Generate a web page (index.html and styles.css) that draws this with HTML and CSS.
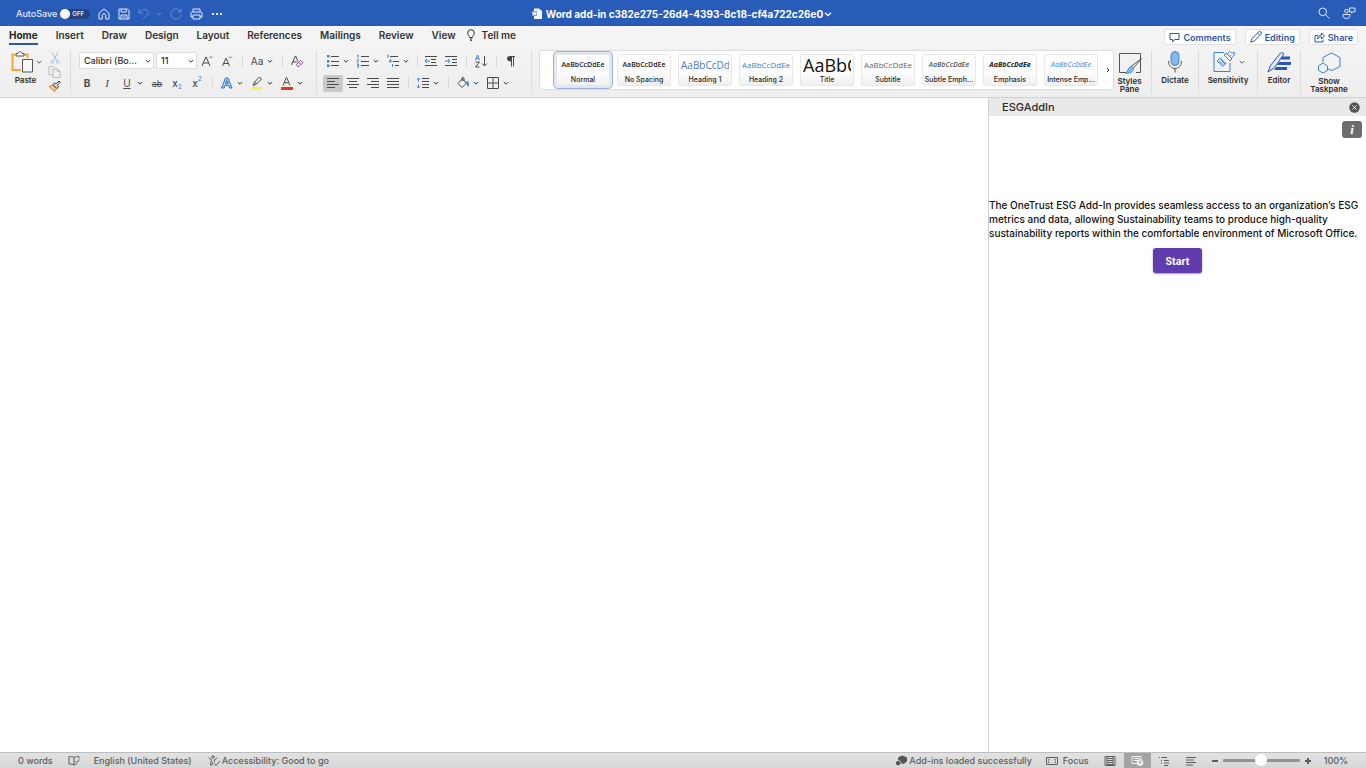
FILE: index.html
```html
<!DOCTYPE html>
<html lang="en">
<head>
<meta charset="utf-8">
<title>Word add-in</title>
<link rel="stylesheet" href="styles.css">
</head>
<body>
<svg class="defs" aria-hidden="true">
  <symbol id="chev" viewBox="0 0 6 6"><path d="M.8 2L3 4.200 5.200 2"/></symbol>
</svg>
<header class="titlebar">
  <div class="quick">
    <label class="autosave">AutoSave
      <span class="toggle"><input type="checkbox" role="switch"><span class="toggle-text">OFF</span></span>
    </label>
    <button aria-label="Home"><svg width="12" height="12" viewBox="0 0 12 12"><path d="M1 5.200L6 1l5 4.200V11H7.700V7.500a1.700 1.700 0 0 0-3.400 0V11H1z"/></svg></button>
    <button aria-label="Save"><svg width="12" height="12" viewBox="0 0 12 12"><path d="M1 1h8.500L11 2.500V11H1zM3.200 1v3h5V1M3 11V7h6v4M4.500 9h3"/></svg></button>
    <button class="dim undo" aria-label="Undo"><svg width="12" height="12" viewBox="0 0 12 12"><path d="M1 1v4h4M1.200 4.800C4 1 8 .8 9.700 3.200c1.500 2.400-.5 4.200-4.700 7.800"/></svg><svg class="chev" width="6" height="6"><use href="#chev"/></svg></button>
    <button class="dim" aria-label="Redo"><svg width="12" height="12" viewBox="0 0 12 12"><path d="M11 .8V4H7.800M10.800 4A5.200 5.200 0 1 0 11.200 6.500"/></svg></button>
    <button aria-label="Print"><svg width="13" height="12" viewBox="0 0 13 12"><path d="M3 4V1h7v3M3 9H1V5.200Q1 4 2.200 4h8.600Q12 4 12 5.200V9h-2M3 7h7v4H3z"/></svg></button>
    <button aria-label="More"><svg width="12" height="12" viewBox="0 0 12 12"><path class="dot" d="M1 5h2v2H1zM5 5h2v2H5zM9 5h2v2H9z"/></svg></button>
  </div>
  <button class="doc-title">
    <svg width="10" height="11" viewBox="0 0 10 11"><path class="page" d="M2 .5h5L10 3v8H2z"/><path class="badge" d="M0 3h5v5H0z"/><path class="badge-mark" d="M1 4.200l.8 2.500.7-2 .8 2L4 4.200"/></svg>
    <span>Word add-in c382e275-26d4-4393-8c18-cf4a722c26e0</span>
    <svg class="chev" width="8" height="8"><use href="#chev"/></svg>
  </button>
  <div class="title-actions">
    <button aria-label="Search"><svg width="12" height="12" viewBox="0 0 12 12"><circle cx="4.800" cy="4.800" r="3.800"/><path d="M7.600 7.600L11.500 11.500"/></svg></button>
    <button aria-label="Collaborate"><svg width="14" height="12" viewBox="0 0 14 12"><circle cx="4.500" cy="4" r="1.800"/><path d="M1 7.500h7v1.200C8 10.300 6.600 11.500 4.500 11.500S1 10.300 1 8.700zM7.500 1h5.500v3.800h-2L9.500 6V4.800h-2z"/></svg></button>
  </div>
</header>

<section class="ribbon">
  <div class="tab-row">
    <nav class="tabs">
      <a class="tab active" href="#">Home</a><a class="tab" href="#">Insert</a><a class="tab" href="#">Draw</a><a class="tab" href="#">Design</a><a class="tab" href="#">Layout</a><a class="tab" href="#">References</a><a class="tab" href="#">Mailings</a><a class="tab" href="#">Review</a><a class="tab" href="#">View</a>
      <a class="tab tell" href="#"><svg width="8" height="12" viewBox="0 0 8 12"><path d="M2.600 8.500C2.600 7 .7 6.300.7 4a3.300 3.300 0 0 1 6.600 0c0 2.300-1.900 3-1.900 4.500zM2.800 10h2.400M3 11.300h2"/></svg>Tell me</a>
    </nav>
    <div class="share-row">
      <button><svg width="11" height="11" viewBox="0 0 11 11"><path d="M1 1.500h9v6H6l-2.500 2.300V7.500H1z"/></svg>Comments</button>
      <button><svg width="12" height="12" viewBox="0 0 12 12"><path d="M.8 11.200l1-3.500L8.500 1a1.400 1.400 0 0 1 2.400 2.400L4.200 10.200zM7.500 2l2.400 2.400"/></svg>Editing</button>
      <button><svg width="11" height="11" viewBox="0 0 11 11"><path d="M4 3.500H1V10h8V7.500M3.500 7c0-2.500 1.500-4 4-4V1l3 3-3 3V5C5.500 5 4.500 5.500 3.500 7z"/></svg>Share</button>
    </div>
  </div>

  <div class="tools">
    <div class="group clipboard">
      <button class="big paste">
        <span class="icon-line"><svg width="24" height="23" viewBox="0 0 24 23"><path class="orange" d="M6 4.500H3.500V20H12M15 4.500h3.500V8"/><path class="paper" d="M7 6V3.500h2C9.500 1 12.500 1 13 3.500h2V6z"/><path class="paper" d="M13.500 9.500h10V22h-10z"/></svg><svg class="chev" width="6" height="6"><use href="#chev"/></svg></span>
        Paste
      </button>
      <div class="stack">
        <button aria-label="Cut"><svg class="faint" width="12" height="12" viewBox="0 0 12 12"><path d="M3 .5l4.800 8M9 .5L4.200 8.500"/><circle class="blue" cx="3.300" cy="9.800" r="1.500"/><circle class="blue" cx="8.700" cy="9.800" r="1.500"/></svg></button>
        <button aria-label="Copy"><svg class="faint" width="13" height="12" viewBox="0 0 13 12"><path d="M5 9H1V.7h4.500L7 2.200M5 3h4.500L12 5.500v6H5zM9.500 3v2.500H12"/></svg></button>
        <button aria-label="Format painter"><svg width="13" height="12" viewBox="0 0 13 12"><path class="orange-fill" d="M1 6.500l4-1.500 3.500 3.500L6.500 11.500z"/><path class="paper" d="M5 4.500L6.500 3 8 4.200 11 1l1.300 1.300L9.200 5.500 10.500 7 9 8.500z"/></svg></button>
      </div>
    </div>

    <div class="group font">
      <div class="row">
        <select class="family" aria-label="Font"><option>Calibri (Bo...</option></select>
        <select class="size" aria-label="Font size"><option>11</option></select>
        <button class="t" aria-label="Grow font"><svg width="14" height="14" viewBox="0 0 14 14"><path d="M2 12L5.800 3h.4L10 12M3.300 9h5.400"/><path class="blue" d="M9.500 4l1.500-1.600L12.500 4"/></svg></button>
        <button class="t" aria-label="Shrink font"><svg width="14" height="14" viewBox="0 0 14 14"><path d="M2.500 12L5.800 4.500h.4L9.500 12M3.500 9.500h5"/><path class="blue" d="M9 2.500l1.500 1.600L12 2.500"/></svg></button>
        <i class="sep"></i>
        <button class="t drop" aria-label="Change case"><span class="glyph">Aa</span><svg class="chev" width="6" height="6"><use href="#chev"/></svg></button>
        <i class="sep"></i>
        <button class="t" aria-label="Clear formatting"><svg width="14" height="14" viewBox="0 0 14 14"><path d="M1.500 11L5.300 2h.4L8 7.500M2.800 8H7"/><path class="purple" d="M6.500 10.500l4-4 2.500 2-4 4H7.500zM8.500 8.500l2.500 2"/></svg></button>
      </div>
      <div class="row">
        <button class="t"><b>B</b></button>
        <button class="t"><em>I</em></button>
        <button class="t drop" aria-label="Underline"><span class="glyph underline">U</span><svg class="chev" width="6" height="6"><use href="#chev"/></svg></button>
        <button class="t"><s>ab</s></button>
        <button class="t script">x<sub>2</sub></button>
        <button class="t script">x<sup>2</sup></button>
        <i class="sep"></i>
        <button class="t drop" aria-label="Text effects"><svg width="14" height="14" viewBox="0 0 14 14"><path class="effect" d="M1.500 12L5.500 2h2.500l4 10H9.500L8.700 9.500H5L4.200 12zM5.700 7.500h2.200L6.800 4.500z"/></svg><svg class="chev" width="6" height="6"><use href="#chev"/></svg></button>
        <button class="t drop" aria-label="Highlight"><svg width="14" height="14" viewBox="0 0 14 14"><path d="M3 9.500L4.500 6 9.500 1 11.500 3 6.500 8zM4.500 6l2 2"/><path class="yellow" d="M1 11h11v3H1z"/></svg><svg class="chev" width="6" height="6"><use href="#chev"/></svg></button>
        <button class="t drop" aria-label="Font color"><svg width="14" height="14" viewBox="0 0 14 14"><path d="M3 9.500L6.300 1.500h.4L10 9.500M4.200 6.700h4.600"/><path class="red" d="M1 11h12v3H1z"/></svg><svg class="chev" width="6" height="6"><use href="#chev"/></svg></button>
      </div>
    </div>

    <div class="group paragraph">
      <div class="row">
        <button class="t drop" aria-label="Bullets"><svg width="14" height="14" viewBox="0 0 14 14"><path d="M5 2.500h8M5 7.500h8M5 11.500h8"/><path class="blue-fill" d="M1 1h2.500v2.500H1zM1 6h2.500v2.500H1zM1 10.500h2.500V13H1z"/></svg><svg class="chev" width="6" height="6"><use href="#chev"/></svg></button>
        <button class="t drop" aria-label="Numbering"><svg width="14" height="14" viewBox="0 0 14 14"><path d="M5 2.500h8M5 7.500h8M5 11.500h8"/><path class="blue" d="M1 1.500L2 1v3M1 5.800h1.500L1 8h1.500M1 10h1.500v3H1M1.500 11.500h1"/></svg><svg class="chev" width="6" height="6"><use href="#chev"/></svg></button>
        <button class="t drop" aria-label="Multilevel list"><svg width="14" height="14" viewBox="0 0 14 14"><path d="M4 2.500h8M7 7.500h6M9 11.500h4"/><path class="blue" d="M1 1.500l1-.5v3M3.500 6H5v2H3.500V7H5M6.500 10v3"/></svg><svg class="chev" width="6" height="6"><use href="#chev"/></svg></button>
        <i class="sep slim"></i>
        <button class="t" aria-label="Decrease indent"><svg width="14" height="14" viewBox="0 0 14 14"><path d="M1 2.500h12M7 5.500h5M7 8.500h5M1 11.500h12"/><path class="blue" d="M6 7H1M3 5L1 7l2 2"/></svg></button>
        <button class="t" aria-label="Increase indent"><svg width="14" height="14" viewBox="0 0 14 14"><path d="M1 2.500h12M8 5.500h5M8 8.500h5M1 11.500h12"/><path class="blue" d="M1 7h5M4 5l2 2-2 2"/></svg></button>
        <i class="sep"></i>
        <button class="t" aria-label="Sort"><svg width="14" height="14" viewBox="0 0 14 14"><path class="blue" d="M1.500 6L3.500 1 5.500 6M2.200 4.500h2.600"/><path d="M1.500 8h4l-4 5h4M10.500 2v10M8 9.500l2.500 2.500L13 9.500"/></svg></button>
        <i class="sep"></i>
        <button class="t" aria-label="Show paragraph marks"><svg width="14" height="14" viewBox="0 0 14 14"><path d="M6.500 2.500H11M7.500 2.500v10M9.500 2.500v10"/><path class="dark-fill" d="M7.500 2v5.500C1.500 7.500 2 2 6 2z"/></svg></button>
      </div>
      <div class="row">
        <button class="t pressed" aria-label="Align left"><svg width="14" height="14" viewBox="0 0 14 14"><path d="M1 2.500h12M1 5.500h8M1 8.500h12M1 11.500h8"/></svg></button>
        <button class="t" aria-label="Center"><svg width="14" height="14" viewBox="0 0 14 14"><path d="M1 2.500h12M3 5.500h8M1 8.500h12M3 11.500h8"/></svg></button>
        <button class="t" aria-label="Align right"><svg width="14" height="14" viewBox="0 0 14 14"><path d="M1 2.500h12M5 5.500h8M1 8.500h12M5 11.500h8"/></svg></button>
        <button class="t" aria-label="Justify"><svg width="14" height="14" viewBox="0 0 14 14"><path d="M1 2.500h12M1 5.500h12M1 8.500h12M1 11.500h12"/></svg></button>
        <i class="sep"></i>
        <button class="t drop" aria-label="Line spacing"><svg width="14" height="14" viewBox="0 0 14 14"><path d="M6 2.500h7M6 5.500h7M6 8.500h7M6 11.500h7"/><path class="blue" d="M2.500 2v3.500M2.500 8.500V12M1 3.500L2.500 2 4 3.500M1 10.500L2.500 12 4 10.500"/></svg><svg class="chev" width="6" height="6"><use href="#chev"/></svg></button>
        <i class="sep"></i>
        <button class="t drop" aria-label="Shading"><svg width="14" height="14" viewBox="0 0 14 14"><path d="M6 3L2 7.500l4 4 4.500-4.500zM6 5V2q1-1.500 2 0v3"/><path class="blue-fill" d="M10 5.500c2.500-1 3.500 1 2.500 5.500-1.500-.5-2-3-2.500-5.500z"/></svg><svg class="chev" width="6" height="6"><use href="#chev"/></svg></button>
        <button class="t drop" aria-label="Borders"><svg width="14" height="14" viewBox="0 0 14 14"><path d="M1.500 1.500h11v11h-11zM7 1.500v11M1.500 7h11"/></svg><svg class="chev" width="6" height="6"><use href="#chev"/></svg></button>
      </div>
    </div>

    <div class="gallery">
      <button class="card selected"><span class="sample">AaBbCcDdEe</span><span class="name">Normal</span></button>
      <button class="card"><span class="sample">AaBbCcDdEe</span><span class="name">No Spacing</span></button>
      <button class="card"><span class="sample h1">AaBbCcDdEe</span><span class="name">Heading 1</span></button>
      <button class="card"><span class="sample h2">AaBbCcDdEe</span><span class="name">Heading 2</span></button>
      <button class="card"><span class="sample title">AaBbCc</span><span class="name">Title</span></button>
      <button class="card"><span class="sample subtitle">AaBbCcDdEe</span><span class="name">Subtitle</span></button>
      <button class="card"><span class="sample subtle">AaBbCcDdEe</span><span class="name">Subtle Emph...</span></button>
      <button class="card"><span class="sample emphasis">AaBbCcDdEe</span><span class="name">Emphasis</span></button>
      <button class="card"><span class="sample intense">AaBbCcDdEe</span><span class="name">Intense Emp...</span></button>
      <button class="more" aria-label="More styles"><svg width="6" height="6" viewBox="0 0 6 6"><path d="M2 1l2 2-2 2"/></svg></button>
    </div>

    <div class="group actions">
      <button class="big styles-pane"><svg width="24" height="23" viewBox="0 0 24 23"><path d="M11 21.500H1.500v-19h21v19H18"/><path class="paper" d="M23.500 7.500L15 17.500 13 15.500z"/><path class="blue-solid" d="M13.500 15.500c2.500 1 2.500 3 .5 5-1.500 1.500-4 2-6.500 1.500 3-1.500 2-5.500 6-6.500z"/></svg>Styles<br>Pane</button>
      <button class="big dictate"><svg width="16" height="23" viewBox="0 0 16 23"><rect class="blue-solid" x="4" y="1.500" width="8" height="14" rx="4"/><path d="M1.500 11c0 10 13 10 13 0M8 18.500v4"/></svg>Dictate</button>
      <button class="big sensitivity"><span class="icon-line"><svg width="24" height="23" viewBox="0 0 24 23"><g class="blue"><path d="M12 2.500H2v19h16V13"/><path d="M12 5l6 6M14 3l6 6M12 5l2-2M18 11l2-2M15.500 4L18 1.500l2 2 2-1.500 1 2-3.500 4M5 11l3-3 6 5.500-3 3zM7 11l4.500 4M8.500 9.500L13 14M17 7l2-2"/></g></svg><svg class="chev" width="6" height="6"><use href="#chev"/></svg></span>Sensitivity</button>
      <button class="big editor"><svg width="24" height="23" viewBox="0 0 24 23"><path class="navy-fill" d="M15 6.500h8v3H13zM12 12h12v3H10zM9 17h11v3H7z"/><path class="navy" d="M1 22L3.500 15.500 13.500 3q2-1 3.500 1L7.500 17.500z"/></svg>Editor</button>
      <button class="big taskpane"><svg width="24" height="23" viewBox="0 0 24 23"><g class="blue"><path d="M6 11V6.500L14.500 2 23 6.500v9L15 19.500l-4-1.500"/><path d="M1.500 15L6 12l4.500 3v4.500L6 22l-4.500-2.500z"/></g></svg>Show<br>Taskpane</button>
    </div>
  </div>
</section>

<main class="workspace">
  <article class="document"></article>
  <aside class="pane">
    <header class="pane-head"><h2>ESGAddIn</h2><button aria-label="Close"><svg width="11" height="11" viewBox="0 0 11 11"><circle cx="5.500" cy="5.500" r="5.200"/><path d="M3.500 3.500l4 4M7.500 3.500l-4 4"/></svg></button></header>
    <div class="pane-body">
      <button class="info" aria-label="Information">i</button>
      <p>The OneTrust ESG Add-In provides seamless access to an organization’s ESG metrics and data, allowing Sustainability teams to produce high-quality sustainability reports within the comfortable environment of Microsoft Office.</p>
      <button class="start">Start</button>
    </div>
  </aside>
</main>

<footer class="status">
  <span class="words">0 words</span>
  <button class="proof" aria-label="Proofing"><svg width="12" height="11" viewBox="0 0 12 11"><path d="M6 2.500C4.500 1.500 3 1.500 1 1.500V9c2 0 3.500 0 5 1 1-.8 2-1 3-1M6 2.500V10M6 2.500c1.500-1 3-1 5-1v2M7.500 6L9 7.500l2.500-3"/></svg></button>
  <button class="lang">English (United States)</button>
  <button class="access"><svg width="13" height="11" viewBox="0 0 13 11"><circle cx="5" cy="2" r="1.200"/><path d="M1 2.500q0 1.500 2.500 2L2.500 10l1 .5L5 7M9 2.500q0 1.500-2.500 2V7M6.500 8.500L8 10.500 12 6"/></svg>Accessibility: Good to go</button>
  <span class="grow"></span>
  <span class="addins"><svg width="13" height="11" viewBox="0 0 13 11"><path class="solid" d="M3.500 2L7.500.5 12 2.500v4L8.500 9 6.500 8.500 5.500 6 3 5zM1 7l2-1.200L5.500 7v2L3.500 10.500 1 9.500z"/></svg>Add-ins loaded successfully</span>
  <button class="focus"><svg width="12" height="10" viewBox="0 0 12 10"><path d="M.5 1.500h11v7H.5z"/><path d="M2.500 4.500v-1h1M8.500 3.500h1v1M9.500 5.500v1h-1M3.500 6.500h-1v-1"/></svg>Focus</button>
  <div class="views">
    <button aria-label="Print layout"><svg width="12" height="10" viewBox="0 0 12 10"><path d="M1 .5h10v9H1zM3 2.500h6M3 4.500h6M3 6.500h6M3 8.500h6M3 .5v9M9 .5v9"/></svg></button>
    <button class="on" aria-label="Web layout"><svg width="14" height="11" viewBox="0 0 14 11"><path d="M7 8.500H2v-7h9V4M4 3.500h5M4 5.500h3"/><circle class="globe" cx="10" cy="7.500" r="3"/><path class="land" d="M8.500 6.500l1.500 1v1.500M11 5.500l.5 1.500"/></svg></button>
    <button aria-label="Outline"><svg width="12" height="10" viewBox="0 0 12 10"><path d="M1 1.500h1M3.500 1.500H9M3 4.500h1M6 4.500h5M3 7h1M6 7h5M6 9.500h4"/></svg></button>
    <button aria-label="Draft"><svg width="12" height="10" viewBox="0 0 12 10"><path d="M1 1.500h10M1 4h8M1 6.500h10M1 9h7"/></svg></button>
  </div>
  <button class="zoom-step" aria-label="Zoom out"><svg width="8" height="8" viewBox="0 0 8 8"><path d="M1 4h6"/></svg></button>
  <input class="zoom" type="range" aria-label="Zoom" min="0" max="100" value="50">
  <button class="zoom-step" aria-label="Zoom in"><svg width="8" height="8" viewBox="0 0 8 8"><path d="M1 4h6M4 1v6"/></svg></button>
  <span class="percent">100%</span>
</footer>
</body>
</html>
```
FILE: styles.css
```css
* { box-sizing: border-box; }
body {
  margin: 0;
  min-height: 100vh;
  display: flex;
  flex-direction: column;
  font-family: Inter, "Liberation Sans", sans-serif;
  font-size: 10px;
  color: #2b2b2b;
  background: #fff;
}
button {
  margin: 0;
  padding: 0;
  border: 0;
  background: none;
  color: inherit;
  font: inherit;
  display: flex;
  align-items: center;
  justify-content: center;
}
svg { display: block; flex: none; fill: none; stroke: currentColor; stroke-width: 1; }
.defs { position: absolute; width: 0; height: 0; }

/* Title bar */
.titlebar {
  height: 26px;
  display: grid;
  grid-template-columns: 1fr auto 1fr;
  align-items: center;
  background: #285cb8;
  color: #e3ebf8;
  padding: 0 10px 0 8px;
}
.quick { display: flex; align-items: center; gap: 8px; padding: 1px 0 0 8px; }
.autosave { display: flex; align-items: center; gap: 3px; font-size: 9px; font-weight: 500; }
.toggle { position: relative; display: block; width: 30px; height: 10px; }
.toggle input {
  appearance: none;
  display: block;
  margin: 0;
  width: 30px;
  height: 10px;
  border-radius: 5px;
  background: #24437c;
}
.toggle input::before {
  content: "";
  display: block;
  width: 10px;
  height: 10px;
  border-radius: 50%;
  background: #fff;
}
.toggle-text { position: absolute; left: 12px; top: 0; font-size: 6px; line-height: 10px; font-weight: 600; }
.dim { color: #6b90d2; }
.undo { gap: 6px; }
.dot { fill: #e3ebf8; stroke: none; }
.doc-title { gap: 4px; color: #fff; font-weight: 700; padding-top: 1px; }
.doc-title .chev { margin-left: -3px; }
.page { fill: #f4f7fd; stroke: none; }
.badge { fill: #86a5dc; stroke: none; }
.badge-mark { stroke: #fff; }
.title-actions { display: flex; justify-content: flex-end; gap: 12px; }

/* Ribbon */
.ribbon { background: linear-gradient(#f5f5f5, #eeeeee); border-bottom: 1px solid #d2d2d2; height: 72px; }
.tab-row { display: flex; justify-content: space-between; height: 22px; padding: 0 8px 0 9px; }
.tabs { display: flex; gap: 18px; }
.tab {
  display: flex;
  align-items: center;
  height: 19px;
  padding-top: 1px;
  color: #333;
  font-weight: 600;
  text-decoration: none;
  border-bottom: 2px solid transparent;
}
.tab.active { color: #222; font-weight: 700; border-color: #2b57a5; }
.tell { gap: 7px; margin-left: -7px; }
.share-row { display: flex; gap: 9px; padding-top: 3px; }
.share-row button {
  height: 16px;
  gap: 3px;
  padding: 0 4px;
  background: #fff;
  border: 1px solid #e2e2e2;
  border-radius: 2px;
  color: #2f56a0;
  font-size: 9px;
  font-weight: 600;
}
.tools { display: flex; height: 46px; align-items: flex-start; padding: 2px 9px 0 9px; }
.group { display: flex; border-right: 1px solid #dcdcdc; height: 44px; }
.big {
  flex-direction: column;
  justify-content: flex-start;
  font-size: 8px;
  line-height: 8px;
  font-weight: 600;
  gap: 3px;
}
.big svg { color: #555; }
.styles-pane, .taskpane { display: block; text-align: center; }
.styles-pane svg, .taskpane svg { margin: 0 auto 3px; }
.icon-line { display: flex; align-items: center; gap: 3px; }
.clipboard { width: 62px; gap: 6px; }
.stack { display: flex; flex-direction: column; gap: 2px; padding-top: 2px; }
.faint { color: #b9b9b9; }
.orange { stroke: #f0a63c; stroke-width: 2; }
.orange-fill { fill: #f9c27a; stroke: #d9822b; }
.paper { fill: #f8f8f8; }
.blue { stroke: #3d83ca; }
.faint .blue { stroke: #a9c6e6; }
.purple { stroke: #9b4fb5; }
.yellow { fill: #f9f04a; stroke: none; }
.red { fill: #e2352b; stroke: none; }
.effect { fill: #a8cdf0; stroke: #2f75bd; }
.blue-fill { fill: #3d83ca; stroke: none; }
.blue-solid { fill: #86b9ec; stroke: #4187cb; }
.dark-fill { fill: #444; stroke: none; }
.navy { stroke: #2f56b0; fill: #dce8f8; }
.navy-fill { fill: #2f56b0; stroke: none; }

.font, .paragraph { flex-direction: column; }
.font { padding-left: 6px; padding-right: 9px; }
.paragraph { padding-left: 6px; padding-right: 10px; }
.row { display: flex; height: 22px; align-items: center; color: #4a4a4a; }
.row + .row { margin-top: 1px; }
select {
  appearance: none;
  height: 17px;
  border: 1px solid #dcdcdc;
  border-radius: 2px;
  padding: 0 4px;
  color: #2b2b2b;
  font: 500 9px Inter, "Liberation Sans", sans-serif;
  background: #fff url("data:image/svg+xml,%3Csvg xmlns='http://www.w3.org/2000/svg' width='6' height='6'%3E%3Cpath d='M.8 2L3 4.200 5.200 2' fill='none' stroke='%23333'/%3E%3C/svg%3E") no-repeat right 2px center;
}
.family { width: 75px; margin: 0 2px; }
.size { width: 41px; }
.t { width: 20px; height: 18px; flex: none; }
.t .chev { color: #333; }
.drop { width: 30px; justify-content: flex-start; padding-left: 3px; gap: 3px; }
.glyph { width: 14px; text-align: center; }
.underline { text-decoration: underline; }
.t em { font-family: "Liberation Serif", serif; font-size: 11px; }
.t s { font-size: 9px; }
.script sub, .script sup { font-size: 6px; line-height: 6px; color: #3d83ca; }
.script sub { align-self: flex-end; }
.script sup { align-self: flex-start; }
.script { padding: 2px 0; font-weight: 500; }
.sep { width: 10px; height: 12px; flex: none; background: linear-gradient(#d8d8d8, #d8d8d8) center / 1px 100% no-repeat; }
.slim { width: 8px; }
.pressed { background: #c9c9c9; border-radius: 2px; height: 17px; }

/* Style gallery */
.gallery {
  flex: 1;
  min-width: 0;
  height: 40px;
  margin-left: 7px;
  padding: 0 3px 0 12px;
  display: flex;
  align-items: center;
  gap: 7px;
  overflow: hidden;
  background: #fff;
  border: 1px solid #dcdcdc;
  border-radius: 3px;
}
.card {
  width: 54px;
  height: 32px;
  flex: none;
  flex-direction: column;
  align-items: stretch;
  border: 1px solid #e8e8e8;
  border-radius: 2px;
  background: linear-gradient(#fff, #fcfcfc 62%, #f0f0f0);
  overflow: hidden;
}
.gallery .card:first-child { margin-left: 4px; }
.selected { outline: 1px solid #9cb2d8; outline-offset: 2px; box-shadow: 0 0 0 3px #dfe7f5; }
.sample {
  height: 20px;
  line-height: 20px;
  margin: 0 2px;
  overflow: hidden;
  white-space: nowrap;
  font-family: "Open Sans", sans-serif;
  font-size: 7px;
  font-weight: 600;
  color: #222;
}
.name { font-size: 7px; line-height: 11px; font-weight: 500; white-space: nowrap; }
.h1, .h2, .title, .subtitle { text-align: left; font-weight: 400; }
.h1 { font-size: 10px; color: #4a80bd; }
.h2 { font-size: 8px; color: #4a80bd; }
.title { font-size: 18px; color: #111; }
.subtitle { font-size: 8px; color: #666; }
.subtle, .emphasis, .intense { font-style: italic; }
.subtle { color: #555; }
.emphasis { font-weight: 700; }
.intense { color: #6b9fdd; }
.more { margin-left: auto; }

.actions { border: 0; }
.actions .big { border-right: 1px solid #dcdcdc; }
.actions .styles-pane { width: 38px; padding-right: 6px; }
.dictate { width: 47px; }
.sensitivity { width: 59px; }
.editor { width: 43px; }
.actions .taskpane { width: 56px; border: 0; }

/* Workspace */
.workspace { flex: 1; display: flex; }
.document { flex: 1; background: #fff; }
.pane { width: 378px; border-left: 1px solid #cfcfcf; }
.pane-head {
  height: 18px;
  display: flex;
  align-items: center;
  justify-content: space-between;
  padding: 0 6px 0 13px;
  background: #e9e9e9;
}
.pane-head h2 { margin: 0; font-size: 11px; font-weight: 500; }
.pane-head circle { fill: #555; stroke: none; }
.pane-head path { stroke: #fff; }
.pane-body { display: flex; flex-direction: column; align-items: center; padding-top: 5px; }
.info {
  align-self: flex-end;
  width: 20px;
  height: 17px;
  margin-right: 4px;
  border-radius: 3px;
  background: #6d6d6d;
  color: #fff;
  font: italic 700 13px "Liberation Serif", serif;
}
.pane p { width: 100%; margin: 60px 0 8px; font-size: 10px; font-weight: 500; line-height: 14px; color: #111; }
.start {
  width: 49px;
  height: 25px;
  border-radius: 3px;
  background: #603cae;
  color: #fff;
  font: 700 10px Inter, sans-serif;
  box-shadow: 0 1px 2px #9c9c9c;
}

/* Status bar */
.status {
  height: 16px;
  display: flex;
  align-items: center;
  padding: 0 18px;
  border-top: 1px solid #bdbdbd;
  background: linear-gradient(#e2e2e2, #d6d6d6);
  color: #5c5c5c;
  font-size: 9px;
  line-height: 15px;
  font-weight: 500;
}
.proof { margin: 0 14px 0 15px; }
.access { margin-left: 16px; gap: 1px; }
.grow { flex: 1; }
.addins { display: flex; align-items: center; gap: 1px; }
.solid { fill: #555; stroke: none; }
.focus { margin: 0 8px 0 14px; gap: 5px; }
.views { display: flex; margin-right: 2px; }
.views button { width: 27px; height: 15px; }
.views .on { background: #a3a3a3; color: #f3f3f3; }
.globe { fill: #f3f3f3; }
.land { stroke: #8b8b8b; }
.zoom-step { width: 16px; }
.zoom-step svg { stroke-width: 2; }
.zoom { appearance: none; width: 77px; height: 12px; margin: 0; background: none; }
.zoom::-webkit-slider-runnable-track { height: 3px; border-radius: 1px; background: #949494; }
.zoom::-webkit-slider-thumb {
  appearance: none;
  width: 12px;
  height: 12px;
  margin-top: -5px;
  border-radius: 50%;
  background: #fff;
}
.percent { margin-left: 8px; }
```
